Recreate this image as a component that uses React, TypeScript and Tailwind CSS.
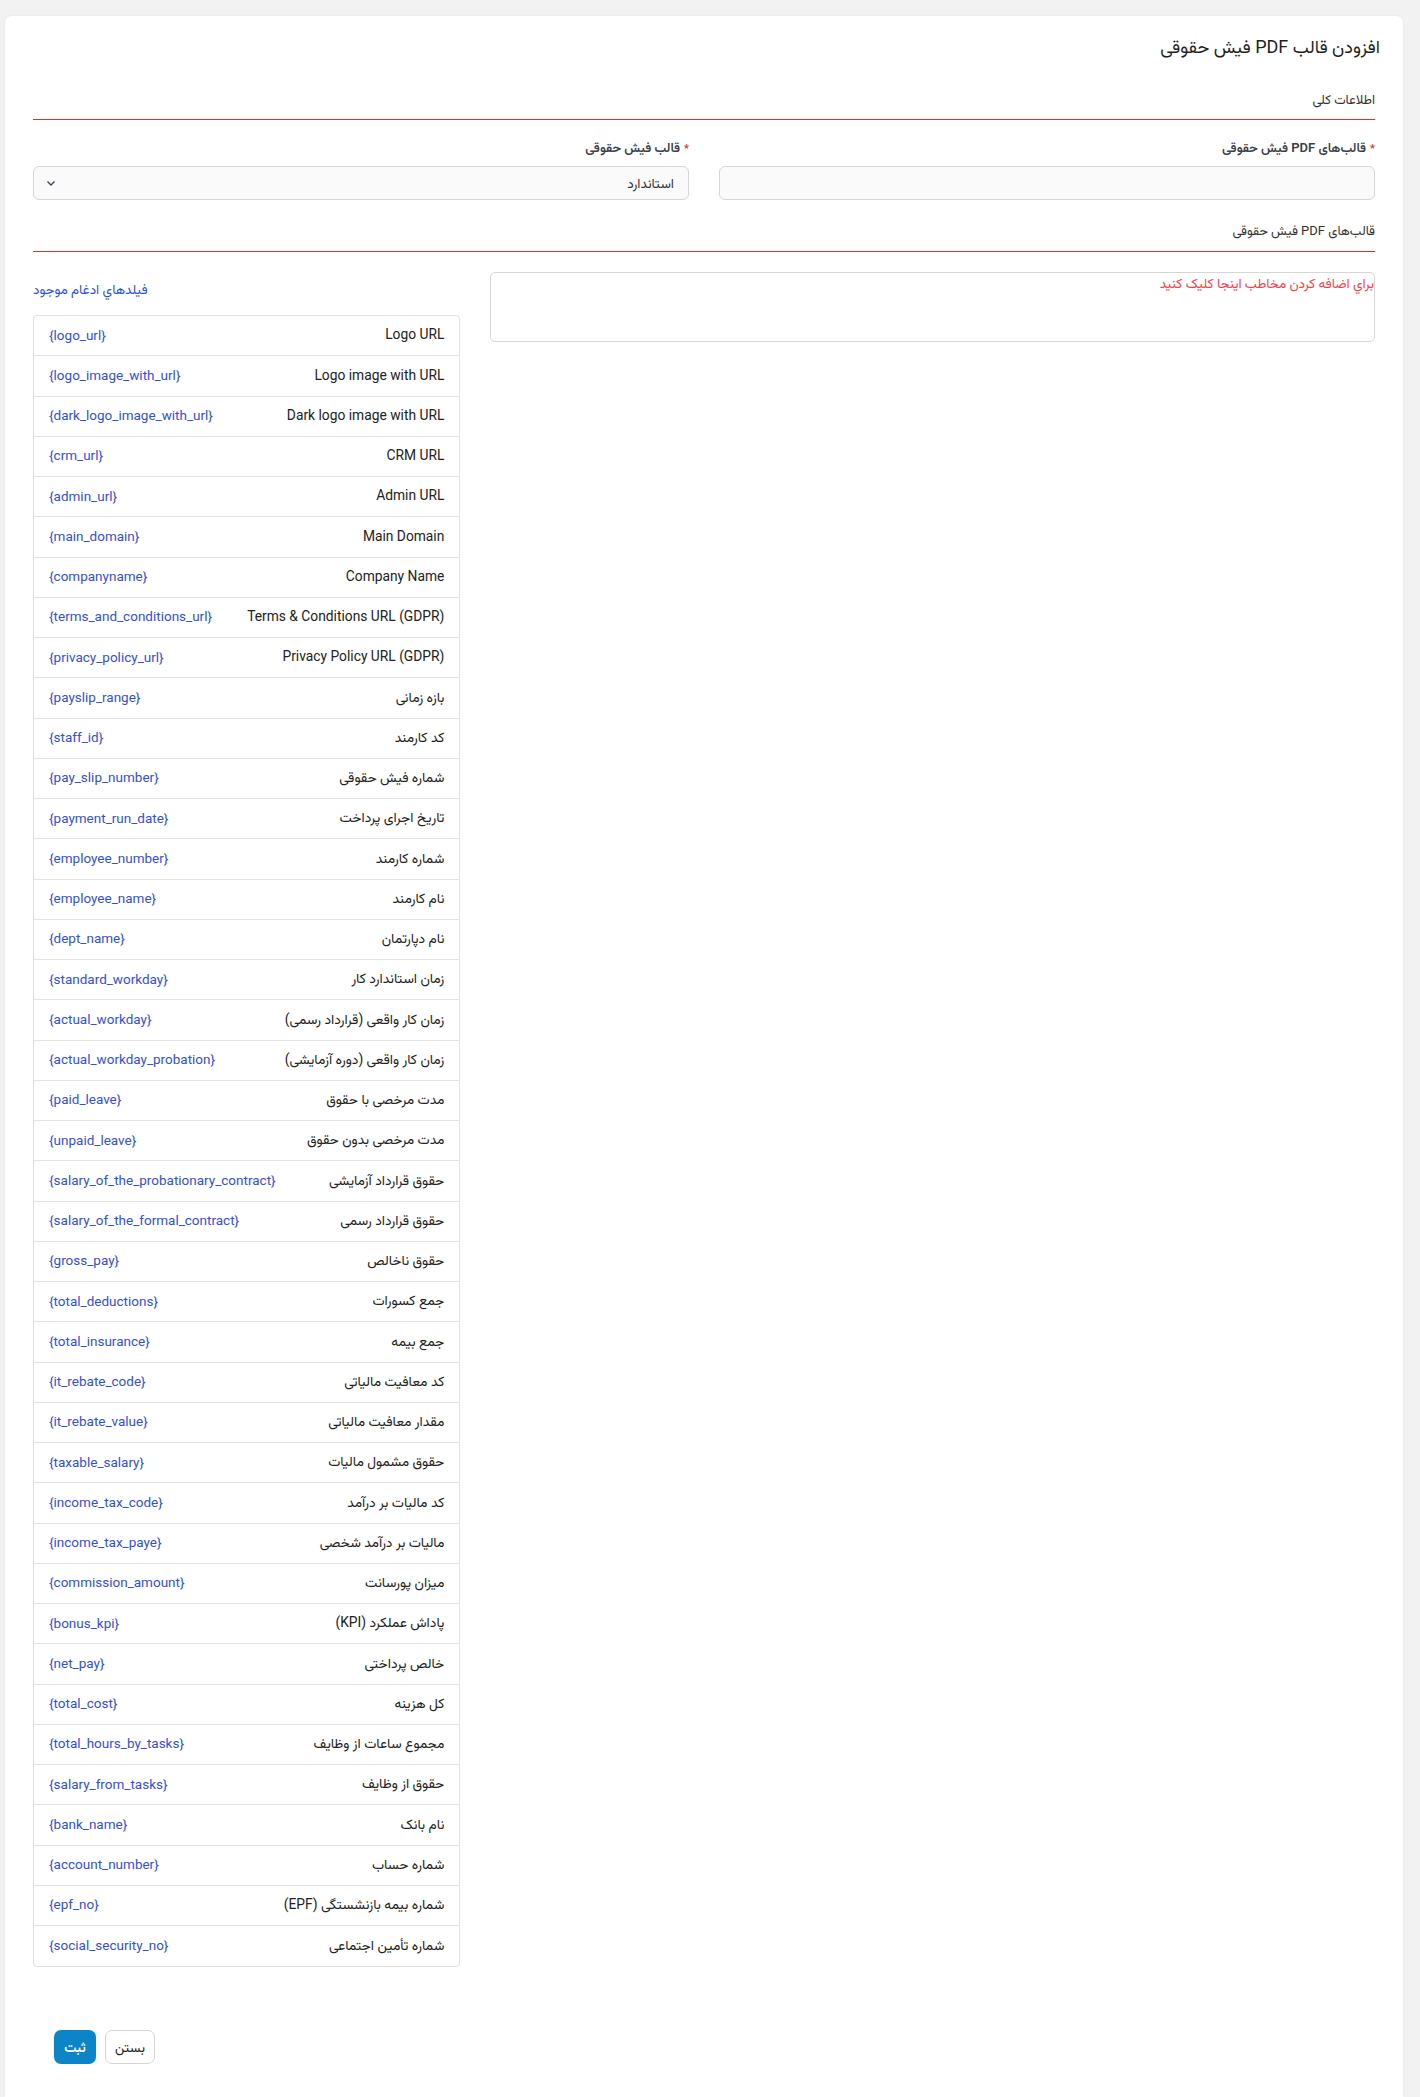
import React from "react";

const rows: [string, string][] = [
  ["Logo URL", "{logo_url}"],
  ["Logo image with URL", "{logo_image_with_url}"],
  ["Dark logo image with URL", "{dark_logo_image_with_url}"],
  ["CRM URL", "{crm_url}"],
  ["Admin URL", "{admin_url}"],
  ["Main Domain", "{main_domain}"],
  ["Company Name", "{companyname}"],
  ["Terms & Conditions URL (GDPR)", "{terms_and_conditions_url}"],
  ["Privacy Policy URL (GDPR)", "{privacy_policy_url}"],
  ["بازه زمانی", "{payslip_range}"],
  ["کد کارمند", "{staff_id}"],
  ["شماره فیش حقوقی", "{pay_slip_number}"],
  ["تاریخ اجرای پرداخت", "{payment_run_date}"],
  ["شماره کارمند", "{employee_number}"],
  ["نام کارمند", "{employee_name}"],
  ["نام دپارتمان", "{dept_name}"],
  ["زمان استاندارد کار", "{standard_workday}"],
  ["زمان کار واقعی (قرارداد رسمی)", "{actual_workday}"],
  ["زمان کار واقعی (دوره آزمایشی)", "{actual_workday_probation}"],
  ["مدت مرخصی با حقوق", "{paid_leave}"],
  ["مدت مرخصی بدون حقوق", "{unpaid_leave}"],
  ["حقوق قرارداد آزمایشی", "{salary_of_the_probationary_contract}"],
  ["حقوق قرارداد رسمی", "{salary_of_the_formal_contract}"],
  ["حقوق ناخالص", "{gross_pay}"],
  ["جمع کسورات", "{total_deductions}"],
  ["جمع بیمه", "{total_insurance}"],
  ["کد معافیت مالیاتی", "{it_rebate_code}"],
  ["مقدار معافیت مالیاتی", "{it_rebate_value}"],
  ["حقوق مشمول مالیات", "{taxable_salary}"],
  ["کد مالیات بر درآمد", "{income_tax_code}"],
  ["مالیات بر درآمد شخصی", "{income_tax_paye}"],
  ["میزان پورسانت", "{commission_amount}"],
  ["پاداش عملکرد (KPI)", "{bonus_kpi}"],
  ["خالص پرداختی", "{net_pay}"],
  ["کل هزینه", "{total_cost}"],
  ["مجموع ساعات از وظایف", "{total_hours_by_tasks}"],
  ["حقوق از وظایف", "{salary_from_tasks}"],
  ["نام بانک", "{bank_name}"],
  ["شماره حساب", "{account_number}"],
  ["شماره بیمه بازنشستگی (EPF)", "{epf_no}"],
  ["شماره تأمین اجتماعی", "{social_security_no}"],
];

export default function App() {
  return (
    <div
      dir="rtl"
      className="min-h-[2097px] bg-[#f2f2f2] pt-4 pl-[5px] pr-[17px] text-[#222]"
      style={{ fontFamily: 'Roboto, Vazirmatn, "Noto Sans Arabic", sans-serif' }}
    >
      <div className="min-h-[2081px] rounded-t-md bg-white px-[28px] pt-[18px] shadow-[0_0_2px_rgba(0,0,0,0.08)]">
        <h1 className="-mr-[5px] text-[18px] leading-[26px] font-normal text-[#1f1f1f]">
          افزودن قالب PDF فیش حقوقی
        </h1>

        <div className="mt-[30px] text-[13px] leading-[20px] text-[#333]">اطلاعات کلی</div>
        <div className="mt-[9px] h-px bg-[#e0301e]" />

        <div className="mt-[18px] grid grid-cols-2 gap-[30px]">
          <div>
            <label className="block text-[13px] leading-[20px] font-semibold text-[#3a3f4a]">
              <span className="text-[#e0301e] text-[11px] ml-1">*</span>قالب‌های PDF فیش حقوقی
            </label>
            <div className="mt-[7px] h-[34px] rounded-md border border-[#d4d6dd] bg-[#fafafa]" />
          </div>
          <div>
            <label className="block text-[13px] leading-[20px] font-semibold text-[#3a3f4a]">
              <span className="text-[#e0301e] text-[11px] ml-1">*</span>قالب فیش حقوقی
            </label>
            <div className="mt-[7px] flex h-[34px] items-center justify-between rounded-md border border-[#d4d6dd] bg-[#fafafa] pr-[14px] pl-[12px] text-[13.5px] text-[#333]">
              <span>استاندارد</span>
              <svg width="10" height="10" viewBox="0 0 10 10" fill="none" stroke="#374151" strokeWidth="1.3">
                <path d="M1.5 3.5 L5 7 L8.5 3.5" />
              </svg>
            </div>
          </div>
        </div>

        <div className="mt-[21px] text-[13px] leading-[20px] text-[#333]">قالب‌های PDF فیش حقوقی</div>
        <div className="mt-[10px] h-px bg-[#e0301e]" />

        <div className="mt-[20px] grid grid-cols-3 gap-[30px]">
          <div className="col-span-2">
            <div className="h-[70px] rounded-[5px] border border-[#d6d6d6] text-[13.5px] leading-[20px] text-[#f0434f]">
              براي اضافه کردن مخاطب اينجا کليک کنيد
            </div>
          </div>
          <div>
            <div className="mt-[7px] text-left text-[13.5px] leading-[20px] text-[#2f52d8]">
              فیلدهاي ادغام موجود
            </div>
            <div className="mt-[16px] overflow-hidden rounded-[4px] border border-[#e0e0e0]">
              {rows.map(([label, code], i) => (
                <div
                  key={code}
                  className={
                    "flex h-[40.25px] items-center justify-between px-[15px] pb-[2px] " +
                    (i < rows.length - 1 ? "border-b border-[#e3e3e3]" : "")
                  }
                >
                  <span dir="auto" className="text-[13.8px] text-[#222]">{label}</span>
                  <span dir="ltr" className="text-[13.5px] text-[#3450d4]">{code}</span>
                </div>
              ))}
            </div>
          </div>
        </div>

        <div className="mt-[63px] flex justify-end gap-[9px] pl-[21px]">
          <button className="h-[34px] w-[50px] rounded-[7px] border border-[#d5d5d5] bg-white text-[13.5px] text-[#222]">
            بستن
          </button>
          <button className="h-[34px] w-[42px] rounded-[7px] bg-[#0b85c8] text-[13.5px] font-semibold text-white">
            ثبت
          </button>
        </div>
      </div>
    </div>
  );
}
